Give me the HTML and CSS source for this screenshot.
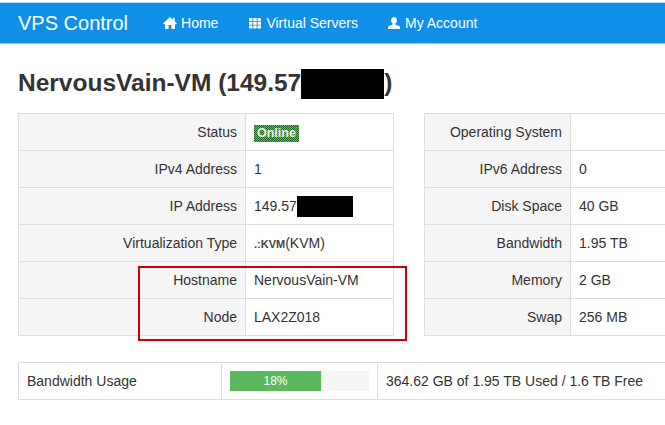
FILE: index.html
```html
<!DOCTYPE html>
<html lang="en">
<head>
    <meta charset="UTF-8">
    <meta name="viewport" content="width=device-width, initial-scale=1.0">
    <title>VPS Control</title>
    <link rel="stylesheet" href="styles.css">
</head>
<body>
    <header class="navbar">
        <a class="brand" href="#">VPS Control</a>
        <nav class="nav-links">
            <a href="#">
                <svg class="nav-icon" viewBox="0 0 14 14"><path d="M7 1 L0 7.6 L1 8.6 L2 7.7 V13 H5.6 V9 H8.4 V13 H12 V7.7 L13 8.6 L14 7.6 L11.6 5.3 V1.8 H10 V3.800 Z"/></svg>
                Home
            </a>
            <a href="#">
                <svg class="nav-icon" viewBox="0 0 14 14"><path d="M1 2h3.400v3H1zM5.300 2h3.400v3H5.300zM9.600 2H13v3H9.600zM1 5.800h3.400v3H1zM5.300 5.800h3.400v3H5.300zM9.600 5.800H13v3H9.600zM1 9.600h3.400v3H1zM5.300 9.600h3.400v3H5.300zM9.600 9.600H13v3H9.600z"/></svg>
                Virtual Servers
            </a>
            <a class="nav-account" href="#">
                <svg class="nav-icon" viewBox="0 0 14 14"><path d="M7 1C5.200 1 4.100 2.300 4.100 4.200 4.100 5.700 4.800 7 5.600 7.600V8.600L1 10.600V13H13V10.600L8.400 8.600V7.600C9.200 7 9.900 5.700 9.900 4.200 9.900 2.300 8.800 1 7 1Z"/></svg>
                My Account
            </a>
        </nav>
    </header>

    <main class="content">
        <h1 class="page-title">NervousVain-VM (149.57<span class="redact redact-title"></span>)</h1>

        <div class="info-tables">
            <table class="info-table info-left">
                <tr><th>Status</th><td><span class="label-online">Online</span></td></tr>
                <tr><th>IPv4 Address</th><td>1</td></tr>
                <tr><th>IP Address</th><td>149.57<span class="redact redact-ip"></span></td></tr>
                <tr><th>Virtualization Type</th><td><span class="kvm-logo">.:KVM</span>(KVM)</td></tr>
                <tr><th>Hostname</th><td>NervousVain-VM</td></tr>
                <tr><th>Node</th><td>LAX2Z018</td></tr>
            </table>

            <table class="info-table info-right">
                <tr><th>Operating System</th><td></td></tr>
                <tr><th>IPv6 Address</th><td>0</td></tr>
                <tr><th>Disk Space</th><td>40 GB</td></tr>
                <tr><th>Bandwidth</th><td>1.95 TB</td></tr>
                <tr><th>Memory</th><td>2 GB</td></tr>
                <tr><th>Swap</th><td>256 MB</td></tr>
            </table>
        </div>

        <table class="usage-table">
            <tr>
                <td class="usage-name">Bandwidth Usage</td>
                <td class="usage-bar-cell">
                    <div class="progress"><div class="progress-bar" style="width: 65.5%">18%</div></div>
                </td>
                <td>364.62 GB of 1.95 TB Used / 1.6 TB Free</td>
            </tr>
        </table>
    </main>

    <!-- red annotation drawn over the screenshot -->
    <div class="annotation"></div>
</body>
</html>
```

FILE: styles.css
```css
/* General styles */
html, body {
    height: 425px;
    overflow: hidden;
}

body {
    position: relative;
    margin: 0;
    padding-top: 2px;
    box-sizing: border-box;
    background-color: #fff;
    color: #333;
    font-family: "Liberation Sans", Arial, sans-serif;
    font-size: 14px;
    line-height: 20px;
}

/* Navbar */
.navbar {
    display: flex;
    align-items: center;
    height: 40px;
    padding-left: 18px;
    background-color: #0f8fe8;
    border-top: 1px solid #b9dcf6;
    border-bottom: 1px solid #8fc8f2;
}

.navbar a {
    color: #fff;
    text-decoration: none;
}

.brand {
    font-size: 20px;
    margin-right: 35px;
}

.nav-links {
    display: flex;
    gap: 30px;
}

.nav-links a {
    display: flex;
    align-items: center;
    gap: 4px;
}

.nav-links .nav-account {
    margin-left: -1px;
}

.nav-icon {
    width: 14px;
    height: 14px;
    fill: #fff;
}

/* Main content */
.content {
    width: 647px;
    padding-left: 18px;
}

.page-title {
    margin: 24px 0 14px;
    font-size: 24.5px;
    line-height: 30px;
    font-weight: bold;
}

.redact {
    display: inline-block;
    background-color: #000;
}

.redact-title {
    width: 83px;
    height: 30px;
    vertical-align: -8px;
}

.redact-ip {
    width: 56px;
    height: 21px;
    vertical-align: -6px;
}

/* Info tables */
.info-tables {
    display: flex;
    gap: 30px;
    margin-bottom: 26px;
}

table {
    border-collapse: collapse;
    table-layout: fixed;
}

th, td {
    height: 37px;
    padding: 0 8px;
    border: 1px solid #ddd;
    box-sizing: border-box;
    white-space: nowrap;
}

.info-table th {
    background-color: #f5f5f5;
    font-weight: normal;
    text-align: right;
}

.info-left {
    flex: none;
    width: 376px;
}

.info-left th {
    width: 227px;
}

.info-right {
    flex: none;
    width: 241px;
}

.info-right th {
    width: 146px;
}

.info-right td,
.usage-table td:last-child {
    border-right: none;
}

.label-online {
    display: inline-block;
    padding: 0 3px;
    color: #eaf7e4;
    font-size: 12.5px;
    font-weight: bold;
    line-height: 17px;
    background-color: #2f7d32;
    background-image: repeating-conic-gradient(#1f6b25 0 25%, #5cb85c 0 50%);
    background-size: 2px 2px;
}

.kvm-logo {
    color: #444;
    font-size: 11px;
    font-weight: bold;
}

/* Usage table */
.usage-table {
    width: 647px;
}

.usage-name {
    width: 203px;
}

.usage-bar-cell {
    width: 156px;
}

.progress {
    height: 20px;
    background-color: #f5f5f5;
}

.progress-bar {
    height: 20px;
    background-color: #5cb85c;
    color: #fff;
    font-size: 12px;
    line-height: 20px;
    text-align: center;
}

/* Red annotation box */
.annotation {
    position: absolute;
    left: 138px;
    top: 266px;
    width: 265px;
    height: 71px;
    border: 2px solid #c8000a;
}
```
